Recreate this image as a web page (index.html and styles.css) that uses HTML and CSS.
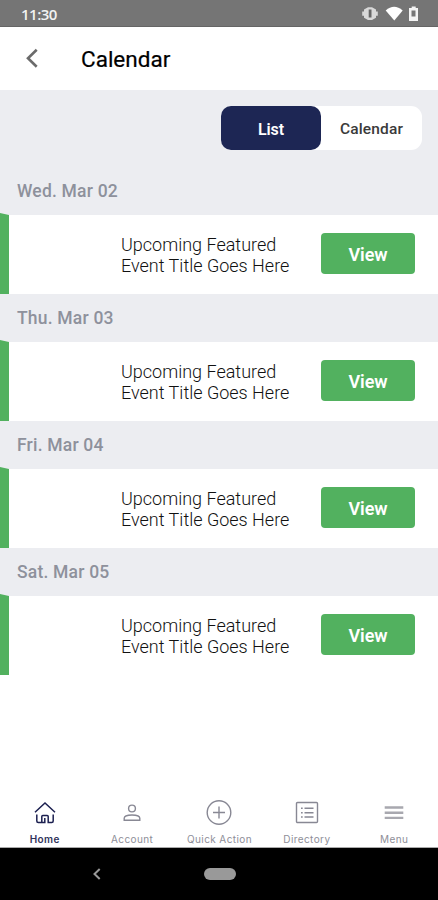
FILE: index.html
```html
<!DOCTYPE html>
<html lang="en">
<head>
<meta charset="utf-8">
<title>Calendar</title>
<link rel="stylesheet" href="styles.css">
</head>
<body>
<div class="status">
  <span class="clock">11:30</span>
  <svg class="status-icons" width="60" height="18" viewBox="0 0 60 18">
    <path d="M4 5.500 8 3.300h4l4 2.200v2h1.800v4.200H16v2l-4 2.200H8l-4-2.200v-2H2.200V7.500H4z" fill="#d8d8d8"/>
    <path d="M8.700 5.500h2.800v8H8.700z" fill="#666"/>
    <path d="M25.700 6.500Q34 -1 42.700 6.500L34.300 16.500z" fill="#fff"/>
    <path d="M51.700 2.500h4v1.500h2.300v13h-9V4h2.700z" fill="#f4f4f4"/>
    <path d="M51.500 6.500h4v6h-4z" fill="#777"/>
  </svg>
</div>
<header class="header">
  <svg class="back" width="14" height="20" viewBox="0 0 14 20"><path d="M12.700 1.700 4 10.200l8.700 8.500" fill="none" stroke="#6b6b6b" stroke-width="2.600"/></svg>
  <h1 class="title">Calendar</h1>
</header>
<main class="content">
  <div class="toolbar">
    <div class="toggle"><button class="tab active">List</button><button class="tab">Calendar</button></div>
  </div>
  <h2 class="date">Wed. Mar 02</h2>
  <div class="event"><i class="bar"></i><p class="name">Upcoming Featured<br>Event Title Goes Here</p><button class="view">View</button></div>
  <h2 class="date">Thu. Mar 03</h2>
  <div class="event"><i class="bar"></i><p class="name">Upcoming Featured<br>Event Title Goes Here</p><button class="view">View</button></div>
  <h2 class="date">Fri. Mar 04</h2>
  <div class="event"><i class="bar"></i><p class="name">Upcoming Featured<br>Event Title Goes Here</p><button class="view">View</button></div>
  <h2 class="date">Sat. Mar 05</h2>
  <div class="event"><i class="bar"></i><p class="name">Upcoming Featured<br>Event Title Goes Here</p><button class="view">View</button></div>
</main>
<nav class="nav">
  <a class="item current"><svg width="26" height="26" viewBox="0 0 26 26"><path d="M3 12.300 13 3l10 9.300M4.800 14.500v6.500q0 1.500 1.500 1.500H9.800v-6q0-1 1-1h4.400q1 0 1 1v6h3.500q1.500 0 1.500-1.500v-6.500M9.800 22.500h3V18" fill="none" stroke="#1c2050" stroke-width="1.500"/></svg><span>Home</span></a>
  <a class="item"><svg width="26" height="26" viewBox="0 0 26 26"><circle cx="13" cy="8.500" r="3.400"/><path d="M5.200 20.200v-2c0-2.200 3-3.200 7.800-3.200s7.800 1 7.800 3.200v2z"/></svg><span>Account</span></a>
  <a class="item"><svg width="26" height="26" viewBox="0 0 26 26"><circle cx="13" cy="12.500" r="11.800"/><path d="M13 6.500v12M7 12.500h12"/></svg><span>Quick Action</span></a>
  <a class="item"><svg width="26" height="26" viewBox="0 0 26 26"><rect x="2.500" y="2.500" width="21" height="20" rx="1"/><path d="M7 8.200h1.700M10.500 8.200h9M7 12.700h1.700M10.500 12.700h9M7 17h1.700M10.500 17h9"/></svg><span>Directory</span></a>
  <a class="item"><svg width="26" height="26" viewBox="0 0 26 26"><path class="lines" d="M3.700 7.500h18.600M3.700 12.700h18.600M3.700 17.900h18.600"/></svg><span>Menu</span></a>
</nav>
<footer class="system">
  <svg width="8" height="12" viewBox="0 0 8 12"><path d="M6.700 1 1.500 6l5.200 5" fill="none" stroke="#999" stroke-width="2"/></svg>
  <i class="pill"></i>
</footer>
</body>
</html>
```
FILE: styles.css
```css
* { box-sizing: border-box; }
body { margin: 0; width: 438px; height: 900px; display: flex; flex-direction: column; background: #fff; font-family: Roboto, "Liberation Sans", sans-serif; overflow: hidden; }
h1, h2, p { margin: 0; font-weight: 400; }
button { border: 0; padding: 0; font-family: inherit; }
.status { height: 27px; flex: none; background: #757575; border-bottom: 1px solid #656565; display: flex; justify-content: space-between; align-items: center; padding: 2px 18px 0 21px; color: #f2f2f2; }
.clock { font: 600 15px/20px "Open Sans", sans-serif; letter-spacing: -.5px; }
.status-icons { margin-top: -2px; }
.header { height: 63px; flex: none; display: flex; align-items: center; padding: 2px 0 0 24px; }
.back { margin-top: -3px; }
.title { margin-left: 43px; font-size: 22.500px; line-height: 28px; font-weight: 400; letter-spacing: 0; color: #000; -webkit-text-stroke: .2px #000; margin-top: -1px; }
.content { flex: none; background: #ecedf1; }
.toolbar { height: 77px; padding: 16px 16px 0 0; display: flex; justify-content: flex-end; }
.toggle { display: flex; width: 201px; height: 44px; border-radius: 11px; background: #fff; }
.tab { width: 101px; background: none; border-radius: 10px; font-size: 15.500px; font-weight: 500; letter-spacing: .15px; color: #3a3a3a; padding-top: 2px; }
.tab.active { width: 100px; background: #1d2654; color: #fff; font-size: 16px; font-weight: 600; letter-spacing: -.1px; }
.date { height: 48px; padding-left: 17px; font-size: 17.500px; line-height: 48px; font-weight: 500; letter-spacing: .2px; color: #8e919c; }
.event { height: 79px; display: flex; align-items: center; background: #fff; }
.bar { width: 9px; height: 81px; flex: none; margin-top: -2px; background: #52b15f; clip-path: polygon(0 0, 100% 2px, 100% 100%, 0 100%); }
.name { margin-left: 112px; width: 200px; font-size: 18px; line-height: 21px; font-weight: 300; letter-spacing: 0; color: #111; padding-top: 1px; white-space: nowrap; }
.view { width: 94px; height: 41px; margin: -3px 0 0; border-radius: 4px; background: #52b15f; color: #fff; font-size: 18px; font-weight: 600; letter-spacing: -.1px; padding-top: 2px; }
.nav { margin-top: auto; height: 52px; flex: none; display: flex; border-bottom: 1px solid #aaa; padding-left: 1px; }
.item { width: 87.400px; flex: none; display: flex; flex-direction: column; align-items: center; color: #8e8e98; font: 400 10px/14px Inter, sans-serif; letter-spacing: .4px; white-space: nowrap; }
.item svg { fill: none; stroke: #888894; stroke-width: 1.400; margin-bottom: 6px; flex: none; margin-top: 4px; }
.item .lines { stroke: #a8a8af; stroke-width: 2.400; }
.current { color: #30335a; font-weight: 600; }
.system { height: 52px; flex: none; background: #000; display: flex; align-items: center; padding-left: 93px; }
.pill { width: 32px; height: 12px; margin-left: 103px; border-radius: 6px; background: #999; }
```
